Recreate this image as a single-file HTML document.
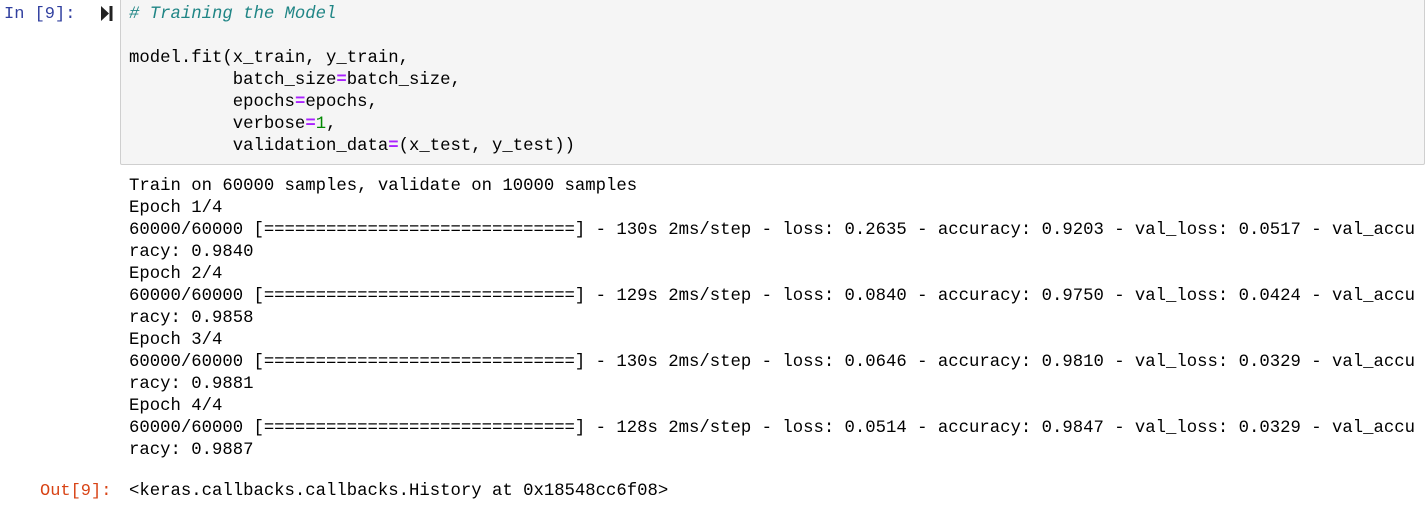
<!DOCTYPE html>
<html><head><style>
body{margin:0;width:1426px;height:507px;background:#fff;overflow:hidden;position:relative;font-family:"Liberation Mono",monospace;font-size:17.3px;}
pre{margin:0;font:inherit;line-height:22px;white-space:pre;position:absolute;}
.box{position:absolute;left:120px;top:-2px;width:1303px;height:165px;background:#f5f5f5;border:1px solid #cfcfcf;border-radius:2px;}
.c{color:#1f8585;font-style:italic}
.o{color:#aa22ff;font-weight:bold}
.n{color:#080}
.p{position:absolute;font-family:"Liberation Mono",monospace;font-size:17px;line-height:22px;}
</style></head><body>
<div class="box"></div>
<div class="p" style="left:4px;top:4px;color:#303f9f">In [9]:</div>
<svg style="position:absolute;left:101px;top:6px" width="12" height="15"><path d="M0 0L8 7.5L0 15Z" fill="#222"/><rect x="8.5" y="0" width="3" height="15" fill="#222"/></svg>
<pre style="left:129px;top:4px"><span class="c"># Training the Model</span>

model.fit(x_train, y_train,
          batch_size<span class="o">=</span>batch_size,
          epochs<span class="o">=</span>epochs,
          verbose<span class="o">=</span><span class="n">1</span>,
          validation_data<span class="o">=</span>(x_test, y_test))</pre>
<pre style="left:129px;top:176px">Train on 60000 samples, validate on 10000 samples
Epoch 1/4
60000/60000 [==============================] - 130s 2ms/step - loss: 0.2635 - accuracy: 0.9203 - val_loss: 0.0517 - val_accu
racy: 0.9840
Epoch 2/4
60000/60000 [==============================] - 129s 2ms/step - loss: 0.0840 - accuracy: 0.9750 - val_loss: 0.0424 - val_accu
racy: 0.9858
Epoch 3/4
60000/60000 [==============================] - 130s 2ms/step - loss: 0.0646 - accuracy: 0.9810 - val_loss: 0.0329 - val_accu
racy: 0.9881
Epoch 4/4
60000/60000 [==============================] - 128s 2ms/step - loss: 0.0514 - accuracy: 0.9847 - val_loss: 0.0329 - val_accu
racy: 0.9887</pre>
<div class="p" style="left:40px;top:481px;color:#d84315">Out[9]:</div>
<pre style="left:129px;top:481px">&lt;keras.callbacks.callbacks.History at 0x18548cc6f08&gt;</pre>
</body></html>
